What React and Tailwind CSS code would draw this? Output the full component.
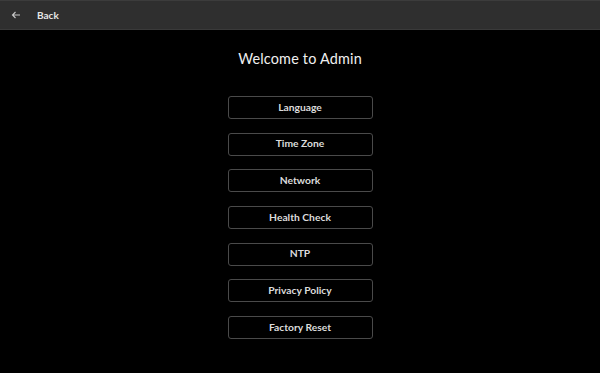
import React from 'react';

const items = ['Language', 'Time Zone', 'Network', 'Health Check', 'NTP', 'Privacy Policy', 'Factory Reset'];

export default function App() {
  return (
    <div className="w-[600px] h-[373px] bg-black flex flex-col overflow-hidden" style={{ fontFamily: 'Lato, "Noto Sans", sans-serif' }}>
      <div className="h-[30px] shrink-0 bg-[#2f2f2f] border-t border-t-[#3c3c3c] border-b border-b-[#3a3a3a] flex items-center">
        <svg className="ml-[11px] w-[10px] h-[10px]" viewBox="0 0 10 10" fill="none" stroke="#c8c8c8" strokeWidth="1.1">
          <path d="M9 5H1.5M4.5 2L1.5 5l3 3" />
        </svg>
        <span className="ml-[16px] text-[10px] font-bold text-[#e6e6e6]">Back</span>
      </div>
      <div className="flex flex-col items-center">
        <h1 className="mt-[19px] text-[14.4px] leading-[20px] text-[#f0f0f0] tracking-[0.2px]">Welcome to Admin</h1>
        <div className="mt-[27px] flex flex-col gap-[13.67px]">
          {items.map((label) => (
            <button
              key={label}
              className="w-[145px] h-[23px] rounded-[3px] border border-[#4a4a4a] text-[10.3px] font-bold text-[#dcdcdc] flex items-center justify-center"
            >
              {label}
            </button>
          ))}
        </div>
      </div>
    </div>
  );
}
